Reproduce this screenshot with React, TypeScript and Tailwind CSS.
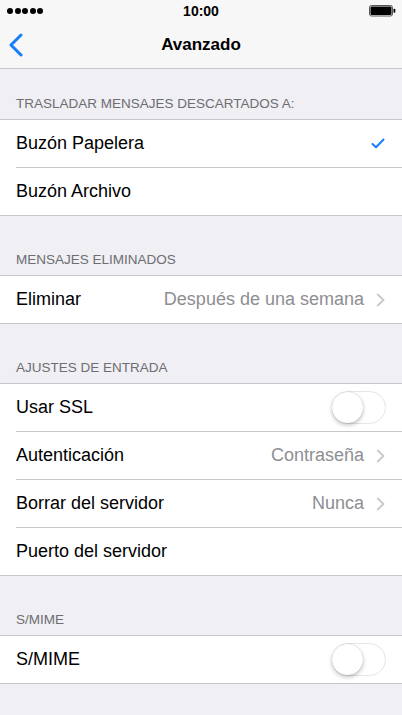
import React from "react";

type Row = {
  label: string;
  value?: string;
  accessory?: "check" | "chevron" | "toggle" | "none";
};

type Section = {
  header: string;
  rows: Row[];
};

const sections: Section[] = [
  {
    header: "Trasladar mensajes descartados a:",
    rows: [
      { label: "Buzón Papelera", accessory: "check" },
      { label: "Buzón Archivo" },
    ],
  },
  {
    header: "Mensajes eliminados",
    rows: [{ label: "Eliminar", value: "Después de una semana", accessory: "chevron" }],
  },
  {
    header: "Ajustes de entrada",
    rows: [
      { label: "Usar SSL", accessory: "toggle" },
      { label: "Autenticación", value: "Contraseña", accessory: "chevron" },
      { label: "Borrar del servidor", value: "Nunca", accessory: "chevron" },
      { label: "Puerto del servidor" },
    ],
  },
  {
    header: "S/MIME",
    rows: [{ label: "S/MIME", accessory: "toggle" }],
  },
];

function StatusBar() {
  return (
    <div className="h-[21px] flex items-center justify-between pl-[7px] pr-[6px] relative">
      <div className="flex gap-[1.5px]">
        {[0, 1, 2, 3, 4].map((i) => (
          <span key={i} className="w-[6px] h-[6px] rounded-full bg-black" />
        ))}
      </div>
      <span className="absolute left-0 right-0 text-center text-[14px] font-bold text-black leading-none">
        10:00
      </span>
      <svg width="27" height="12" viewBox="0 0 27 12">
        <rect x="0.5" y="0.5" width="23" height="10.5" rx="2" fill="none" stroke="#555" strokeWidth="1" />
        <rect x="1.5" y="1.5" width="21" height="8.5" rx="1" fill="#000" />
        <rect x="24.5" y="3.8" width="1.8" height="4" rx="0.8" fill="#000" />
      </svg>
    </div>
  );
}

function NavBar() {
  return (
    <div className="h-[48px] border-b border-[#c8c7cc] flex items-center relative">
      <svg className="ml-[8px]" width="16" height="24" viewBox="0 0 16 24">
        <path d="M13 2 L3 12 L13 22" fill="none" stroke="#157efb" strokeWidth="3" strokeLinecap="round" strokeLinejoin="round" />
      </svg>
      <span className="absolute left-0 right-0 text-center text-[17px] font-bold text-black pointer-events-none">
        Avanzado
      </span>
    </div>
  );
}

function Toggle() {
  return (
    <div className="w-[54px] h-[33px] rounded-full border-[1.5px] border-[#e5e5ea] bg-white relative">
      <div className="absolute left-[-1px] top-[-0.5px] w-[31px] h-[31px] rounded-full bg-white shadow-[0_2px_4px_rgba(0,0,0,0.25),0_0_1px_rgba(0,0,0,0.25)]" />
    </div>
  );
}

function Check() {
  return (
    <svg width="14" height="11" viewBox="0 0 14 11">
      <path d="M1.5 6 L5 9.2 L12.5 1.5" fill="none" stroke="#157efb" strokeWidth="2" strokeLinecap="round" strokeLinejoin="round" />
    </svg>
  );
}

function Chevron() {
  return (
    <svg width="9" height="14" viewBox="0 0 9 14">
      <path d="M1.2 1 L7.5 7 L1.2 13" fill="none" stroke="#c7c7cc" strokeWidth="1.8" />
    </svg>
  );
}

function SettingsRow({ row, last }: { row: Row; last: boolean }) {
  return (
    <div className="pl-4 bg-white">
      <div
        className={`flex items-center pr-4 ${last ? "h-[47px]" : "h-[48px] border-b border-[#c8c7cc]"}`}
      >
        <span className="text-[18px] text-black flex-1">{row.label}</span>
        {row.value && <span className="text-[18px] text-[#8e8e93] mr-[12px]">{row.value}</span>}
        {row.accessory === "check" && (
          <span className="mr-[1px]">
            <Check />
          </span>
        )}
        {row.accessory === "chevron" && (
          <span className="mr-[1px] flex">
            <Chevron />
          </span>
        )}
        {row.accessory === "toggle" && <Toggle />}
      </div>
    </div>
  );
}

export default function App() {
  return (
    <div
      className="w-[402px] h-[715px] bg-[#efeff4] overflow-hidden"
      style={{ fontFamily: "'Liberation Sans', Arial, sans-serif" }}
    >
      <div className="bg-[#f7f7f7]">
        <StatusBar />
        <NavBar />
      </div>

      {sections.map((section, si) => (
        <div key={section.header}>
          <div
            className={`${si === 0 ? "h-[50px]" : "h-[59px]"} flex items-end px-4 pb-[7px]`}
          >
            <span className="text-[13.5px] leading-4 uppercase text-[#6d6d72]">
              {section.header}
            </span>
          </div>
          <div className="border-y border-[#c8c7cc]">
            {section.rows.map((row, i) => (
              <SettingsRow key={row.label} row={row} last={i === section.rows.length - 1} />
            ))}
          </div>
        </div>
      ))}
    </div>
  );
}
